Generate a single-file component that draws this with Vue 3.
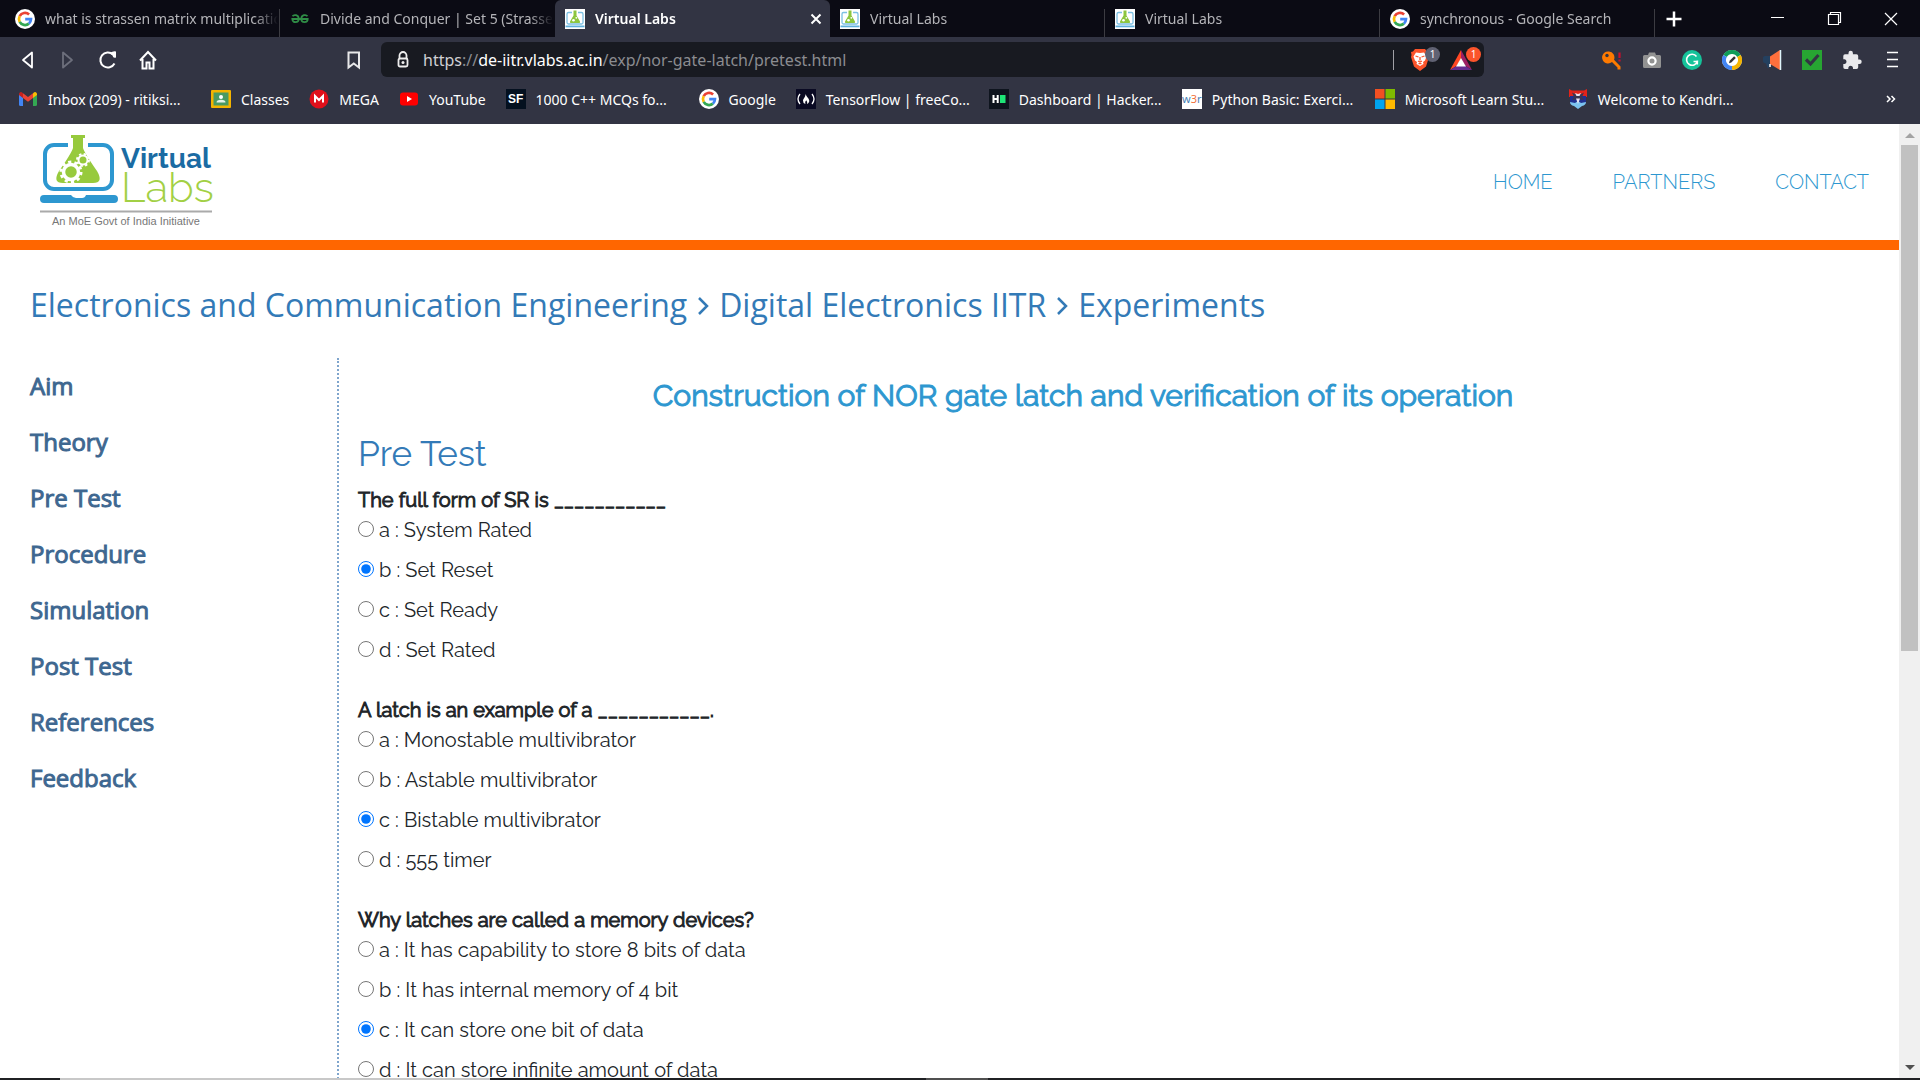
<script setup>
import { reactive } from 'vue'

const tabs = [
  { icon: 'google', title: 'what is strassen matrix multiplication' },
  { icon: 'gfg', title: 'Divide and Conquer | Set 5 (Strassen' },
  { icon: 'vlabs', title: 'Virtual Labs', active: true },
  { icon: 'vlabs', title: 'Virtual Labs' },
  { icon: 'vlabs', title: 'Virtual Labs' },
  { icon: 'google', title: 'synchronous - Google Search' }
]

const bookmarks = [
  { icon: 'gmail', title: 'Inbox (209) - ritiksi...', long: true },
  { icon: 'classroom', title: 'Classes' },
  { icon: 'mega', title: 'MEGA' },
  { icon: 'youtube', title: 'YouTube' },
  { icon: 'sf', title: '1000 C++ MCQs fo...', long: true },
  { icon: 'google', title: 'Google' },
  { icon: 'fcc', title: 'TensorFlow | freeCo...', long: true },
  { icon: 'hacker', title: 'Dashboard | Hacker...', long: true },
  { icon: 'w3r', title: 'Python Basic: Exerci...', long: true },
  { icon: 'microsoft', title: 'Microsoft Learn Stu...', long: true },
  { icon: 'kv', title: 'Welcome to Kendri...', long: true }
]

const extensions = ['key', 'camera', 'grammarly', 'pen', 'horn', 'check', 'puzzle', 'menu']

const siteLinks = ['HOME', 'PARTNERS', 'CONTACT']
const sections = ['Aim', 'Theory', 'Pre Test', 'Procedure', 'Simulation', 'Post Test', 'References', 'Feedback']

const questions = reactive([
  {
    text: 'The full form of SR is ___________',
    picked: 'b',
    options: { a: 'System Rated', b: 'Set Reset', c: 'Set Ready', d: 'Set Rated' }
  },
  {
    text: 'A latch is an example of a ___________.',
    picked: 'c',
    options: { a: 'Monostable multivibrator', b: 'Astable multivibrator', c: 'Bistable multivibrator', d: '555 timer' }
  },
  {
    text: 'Why latches are called a memory devices?',
    picked: 'c',
    options: {
      a: 'It has capability to store 8 bits of data',
      b: 'It has internal memory of 4 bit',
      c: 'It can store one bit of data',
      d: 'It can store infinite amount of data'
    }
  }
])
</script>

<template>
  <div class="window">
    <svg class="defs" aria-hidden="true">
      <symbol id="google" viewBox="0 0 20 20">
        <circle cx="10" cy="10" r="10" fill="#fff" />
        <g fill="none" stroke-width="2.7">
          <path d="M14.1 5.4A6 6 0 0 0 4.7 7.2" stroke="#ea4335" />
          <path d="M4.7 7.2A6 6 0 0 0 4.7 12.8" stroke="#fbbc05" />
          <path d="M4.7 12.8A6 6 0 0 0 13.9 14.6" stroke="#34a853" />
          <path d="M13.9 14.6A6 6 0 0 0 16 10.1H10.2" stroke="#4285f4" />
        </g>
      </symbol>
      <symbol id="gfg" viewBox="0 0 20 20">
        <g fill="none" stroke="#2f8d46" stroke-width="1.8">
          <path d="M2.5 7.2C4 5.3 8.7 5.6 8.7 10a3.2 3.2 0 0 1-6.4 0H17.7a3.2 3.2 0 0 1-6.4 0c0-4.4 4.7-4.7 6.2-2.8" />
        </g>
      </symbol>
      <symbol id="vlabs" viewBox="0 0 20 20">
        <rect width="20" height="20" fill="#fff" />
        <path d="M7 3.5H3.500a1.500 1.500 0 0 0-1.500 1.500v8.500A1.500 1.500 0 0 0 3.500 15h13a1.500 1.500 0 0 0 1.500-1.500V5a1.500 1.500 0 0 0-1.500-1.500H13" fill="none" stroke="#7cc0e4" stroke-width="1.3" />
        <path d="M0.5 16.5h19v1.8h-19z" fill="#5fb0dc" />
        <path d="M8.5 1.5h3v5l3.500 6q.5 1.500-1 1.500H6q-1.500 0-1-1.500l3.500-6z" fill="#8dc63f" />
        <circle cx="8.5" cy="11.3" r="1.3" fill="#fff" />
        <circle cx="11.3" cy="8.8" r=".9" fill="#fff" />
      </symbol>
      <symbol id="gmail" viewBox="0 0 20 20">
        <path d="M1 5.5v10A1.500 1.500 0 0 0 2.500 17H5V8.500z" fill="#4285f4" />
        <path d="M19 5.5v10a1.500 1.500 0 0 1-1.500 1.500H15V8.500z" fill="#34a853" />
        <path d="M15 4.5V9l4-3V5a2 2 0 0 0-3.200-1.500z" fill="#fbbc04" />
        <path d="M5 4.5V9L1 6V5a2 2 0 0 1 3.200-1.500z" fill="#c5221f" />
        <path d="M5 4.2l5 3.800 5-3.800V9l-5 3.800L5 9z" fill="#ea4335" />
      </symbol>
      <symbol id="classroom" viewBox="0 0 20 20">
        <rect y="1" width="20" height="18" rx="1" fill="#f4b400" />
        <rect x="2.5" y="3.500" width="15" height="13" fill="#4a9a62" />
        <circle cx="10" cy="8" r="2" fill="#fff" />
        <path d="M5.5 13.500q0-2.700 4.500-2.700t4.500 2.700z" fill="#e4f2e8" />
      </symbol>
      <symbol id="mega" viewBox="0 0 20 20">
        <circle cx="10" cy="10" r="9.5" fill="#e0101b" />
        <path d="M6 13.500V7l4 4 4-4v6.500" fill="none" stroke="#fff" stroke-width="2" />
      </symbol>
      <symbol id="youtube" viewBox="0 0 20 20">
        <rect x="1" y="3.5" width="18" height="13" rx="3" fill="#f00" />
        <path d="M8 7v6l5-3z" fill="#fff" />
      </symbol>
      <symbol id="fcc" viewBox="0 0 20 20">
        <rect width="20" height="20" fill="#0a0a23" />
        <path d="M4 5Q0 10 4 15M16 5q4 5 0 10" fill="none" stroke="#fff" stroke-width="1.3" />
        <path d="M9.500 5c1 3 4 4.700 3.800 7.200q-.5 2-2.300 2.800q.8-2.300-.8-3.800q-1.600 1.500-.8 3.800Q6.800 14 7 11.500c.2-2 2.500-3 2.500-6.500z" fill="#fff" />
      </symbol>
      <symbol id="hacker" viewBox="0 0 20 20">
        <rect width="20" height="20" fill="#0e141e" />
        <path d="M4.5 6v8M8.700 6v8M4.500 10h4" stroke="#fff" stroke-width="2" />
        <rect x="11" y="6" width="5.5" height="8" fill="#1ee577" />
      </symbol>
      <symbol id="microsoft" viewBox="0 0 20 20">
        <path d="M0 0h9.500v9.500H0z" fill="#f25022" />
        <path d="M10.500 0H20v9.500h-9.500z" fill="#7fba00" />
        <path d="M0 10.500h9.500V20H0z" fill="#00a4ef" />
        <path d="M10.500 10.500H20V20h-9.500z" fill="#ffb900" />
      </symbol>
      <symbol id="kv" viewBox="0 0 20 20">
        <path d="M1 0l3 1.500h12L19 0v8H1z" fill="#e2231a" />
        <path d="M2 7h16v6l-4 3-4 3.500L6 16l-4-3z" fill="#20308f" />
        <path d="M2 13l5 1 3-2 3 2 5-1q0 3-4 4l-4 3-4-3q-4-1-4-4z" fill="#7cc4f0" />
        <path d="M4 3.500l3 1.500h6l3-1.500L14 8l2 3-6-1-6 1 2-3z" fill="#3a3550" />
        <path d="M7 4l3 1 3-1-1.500 3h-3zM8 9.500h4L10 15z" fill="#e8e2ee" />
      </symbol>
      <symbol id="key" viewBox="0 0 20 20">
        <path d="M7 1.500a6 6 0 1 0 3 10.500l5.500 5.500v2h3v-3L12 9.700A6 6 0 0 0 7 1.500z" fill="#ff7a00" />
        <circle cx="5" cy="5.5" r="1.7" fill="#323443" />
        <path d="M17.500 2.500v5.500M17.500 9.500v2" stroke="#c8102e" stroke-width="2.2" />
      </symbol>
      <symbol id="camera" viewBox="0 0 20 20">
        <path d="M2.500 5H6l1-2.500h6L14 5h3.500A1.500 1.500 0 0 1 19 6.500v10a1.500 1.500 0 0 1-1.500 1.500h-15A1.500 1.500 0 0 1 1 16.500v-10A1.500 1.500 0 0 1 2.500 5z" fill="#929292" />
        <circle cx="10" cy="11" r="3.6" fill="#929292" stroke="#fff" stroke-width="2.2" />
      </symbol>
      <symbol id="grammarly" viewBox="0 0 20 20">
        <circle cx="10" cy="10" r="10" fill="#15c39a" />
        <path d="M14.500 6.500A5.500 5.500 0 1 0 15.300 11.500H11.500M15.300 10.500v4" fill="none" stroke="#fff" stroke-width="1.6" />
      </symbol>
      <symbol id="pen" viewBox="0 0 20 20">
        <circle cx="10" cy="10" r="10" fill="#fff" />
        <g fill="none" stroke-width="4">
          <path d="M3.070 6A8 8 0 0 1 16.930 6" stroke="#0f9d58" />
          <path d="M16.930 6A8 8 0 0 1 10 18" stroke="#f4b400" />
          <path d="M10 18A8 8 0 0 1 3.070 6" stroke="#4285f4" />
        </g>
        <path d="M7 13.200l.6-2.400 4.500-4.500 1.700 1.700-4.500 4.500z" fill="#333" />
      </symbol>
      <symbol id="horn" viewBox="0 0 20 20">
        <path d="M1 7.500Q1 6 3 6h5v7l-1 5H5.500L4 13.500Q1 13 1 11z" fill="#24405f" />
        <path d="M8 6.500L18 0v20L8 14z" fill="#ff6f3c" />
        <path d="M18.500 0v20" stroke="#dff4fb" stroke-width="1.5" />
        <path d="M8 14v3" stroke="#fff" stroke-width="1.5" />
      </symbol>
      <symbol id="check" viewBox="0 0 20 20">
        <rect width="20" height="20" fill="#27a532" />
        <path d="M4 9.500l4.500 4.500 8-9" fill="none" stroke="#323443" stroke-width="3.2" />
      </symbol>
      <symbol id="puzzle" viewBox="0 0 20 20">
        <path d="M17.500 9.500h-1.300V6A1.700 1.700 0 0 0 14.500 4.300h-3.600V3a2.200 2.200 0 0 0-4.400 0v1.300H3A1.700 1.700 0 0 0 1.300 6v3.300h1.300a2.400 2.400 0 0 1 0 4.700H1.300v3.300A1.700 1.700 0 0 0 3 19h3.300v-1.300a2.400 2.400 0 0 1 4.700 0V19h3.500a1.700 1.700 0 0 0 1.700-1.700v-3.400h1.300a2.200 2.200 0 0 0 0-4.400z" fill="#e9e9ec" />
      </symbol>
      <symbol id="menu" viewBox="0 0 20 20">
        <path d="M5 2.500h11M5 9.500h11M5 16.500h11" stroke="#fff" stroke-width="1.5" />
      </symbol>
    </svg>

    <header class="chrome">
      <div class="tabs">
        <div v-for="(tab, i) in tabs" :key="i" class="tab" :class="{ active: tab.active }">
          <svg class="glyph"><use :href="'#' + tab.icon" /></svg>
          <span class="tab-title">{{ tab.title }}</span>
          <button v-if="tab.active" class="plain" aria-label="Close tab">
            <svg class="close" viewBox="0 0 12 12"><path d="M1.500 1.500l9 9M10.500 1.500l-9 9" stroke="#fff" stroke-width="2" /></svg>
          </button>
        </div>
        <button class="plain new-tab" aria-label="New tab">
          <svg class="glyph" viewBox="0 0 20 20"><path d="M10 2.500v15M2.500 10h15" stroke="#fff" stroke-width="2.5" /></svg>
        </button>
        <div class="window-buttons">
          <button class="plain" aria-label="Minimize"><svg class="glyph" viewBox="0 0 20 20"><path d="M3 8.500h13" stroke="#fff" /></svg></button>
          <button class="plain" aria-label="Restore"><svg class="glyph" viewBox="0 0 20 20"><path d="M3.500 5.500h10v10h-10zM5.500 5V3.500h10v10H14" fill="none" stroke="#fff" stroke-width="1.2" /></svg></button>
          <button class="plain" aria-label="Close"><svg class="glyph" viewBox="0 0 20 20"><path d="M3 4l12 12M15 4L3 16" stroke="#fff" stroke-width="1.2" /></svg></button>
        </div>
      </div>

      <div class="toolbar">
        <button class="plain tool" aria-label="Back"><svg class="glyph" viewBox="0 0 20 20"><path d="M14 2.500v15L5 10z" fill="none" stroke="#fff" stroke-width="1.8" stroke-linejoin="round" /></svg></button>
        <button class="plain tool" aria-label="Forward"><svg class="glyph" viewBox="0 0 20 20"><path d="M5 2.500v15l9-7.500z" fill="none" stroke="#6d6f7c" stroke-width="1.8" stroke-linejoin="round" /></svg></button>
        <button class="plain tool" aria-label="Reload"><svg class="glyph" viewBox="0 0 20 20"><path d="M15 4.500A7.500 7.500 0 1 0 16.500 13.500" fill="none" stroke="#fff" stroke-width="2" /><path d="M12 3q3.500-2.500 6-1.500v6q-3 1-3.500-2z" fill="#fff" /></svg></button>
        <button class="plain tool" aria-label="Home"><svg class="glyph" viewBox="0 0 20 20"><path d="M2 10.500L10 2l8 8.500M4.500 9v9.500h4v-6h3v6h4V9" fill="none" stroke="#fff" stroke-width="2" /></svg></button>
        <button class="plain tool save" aria-label="Bookmark this page"><svg class="glyph" viewBox="0 0 20 20"><path d="M4.500 2.500h10.500v15L9.750 13.500 4.500 17.500z" fill="none" stroke="#e8e8ea" stroke-width="2" /></svg></button>
        <div class="address">
          <svg class="glyph" viewBox="0 0 20 20"><path d="M6.500 8V5.500a3.500 3.500 0 0 1 7 0V8" fill="none" stroke="#eee" stroke-width="1.8" /><rect x="5.500" y="8.500" width="9" height="8" rx="1.5" fill="none" stroke="#eee" stroke-width="1.8" /><circle cx="10" cy="12.500" r="1.5" fill="#eee" /></svg>
          <a class="url" href="https://de-iitr.vlabs.ac.in/exp/nor-gate-latch/pretest.html"><span class="scheme">https</span><span>://</span><span class="host">de-iitr.vlabs.ac.in</span><span>/exp/nor-gate-latch/pretest.html</span></a>
          <span class="divider"></span>
          <span class="shield">
            <svg class="shield-icon" viewBox="0 0 20 22"><path d="M5 0h10l2 2.500 2 .5-.5 3 .5 2-3 9.500L10 22l-6-4.500L1 8l.5-2L1 3l2-.5z" fill="#fb542b" /><path d="M10 4l4-.5 2.500 4-1.500 4-2 1.500.5 2L10 17l-3.500-2 .5-2-2-1.500-1.500-4L6 3.500z" fill="#fff" /><path d="M5.500 7l3 1M14.500 7l-3 1M10 8v3.500M8 12l2 1 2-1M8.500 14.700h3" stroke="#fb542b" stroke-width="1.3" fill="none" /></svg>
            <span class="count">1</span>
          </span>
          <span class="shield">
            <svg class="shield-icon" viewBox="0 0 22 20"><path d="M11 0v9L6.500 16 0 20z" fill="#ff4724" /><path d="M11 0v9l4.500 7 6.500 4z" fill="#9e1f63" /><path d="M0 20l6.500-4h9l6.500 4z" fill="#662d91" /><path d="M11 8l5 8.500H6z" fill="#fff" /></svg>
            <span class="count hot">1</span>
          </span>
        </div>
        <div class="extensions">
          <button v-for="name in extensions" :key="name" class="plain tool" :aria-label="name">
            <svg class="glyph"><use :href="'#' + name" /></svg>
          </button>
        </div>
      </div>

      <nav class="bookmarks" aria-label="Bookmarks">
        <a v-for="mark in bookmarks" :key="mark.title" href="#" class="bookmark">
          <span v-if="mark.icon === 'sf'" class="letters sf">SF</span>
          <span v-else-if="mark.icon === 'w3r'" class="letters w3r">w<b>3</b>r</span>
          <svg v-else class="glyph"><use :href="'#' + mark.icon" /></svg>
          <span :class="{ long: mark.long }">{{ mark.title }}</span>
        </a>
        <button class="plain more" aria-label="More bookmarks">
          <svg viewBox="0 0 10 8" width="10" height="8"><path d="M1 1l3 3-3 3M5.500 1l3 3-3 3" fill="none" stroke="#fff" stroke-width="1.5" /></svg>
        </button>
      </nav>
    </header>

    <div class="viewport">
      <div class="page">
        <header class="site-header">
          <a href="#" class="logo" aria-label="Virtual Labs">
            <svg viewBox="0 0 176 96" width="176" height="96">
              <path d="M28 11H14a9 9 0 0 0-9 9V46a9 9 0 0 0 9 9H63a9 9 0 0 0 9-9V20a9 9 0 0 0-9-9H48" fill="none" stroke="#2d97d0" stroke-width="4" />
              <path d="M4 61h27q2 3 5 3h6q3 0 4-3h28q4 0 4 4t-4 4H4q-4 0-4-4t4-4z" fill="#2d97d0" />
              <path d="M31 1h14v3h-2v10q2 6 14 23q7 12-4 12H23q-11 0-4-12q12-17 14-23V4h-2z" fill="#97ca3d" />
              <g fill="none" stroke="#fff">
                <circle cx="31" cy="38" r="7.5" stroke-width="3.5" />
                <circle cx="31" cy="38" r="10" stroke-width="3" stroke-dasharray="3.140" />
                <circle cx="43" cy="26" r="4.5" stroke-width="2" />
                <circle cx="43" cy="26" r="6" stroke-width="2" stroke-dasharray="2.356" />
              </g>
              <text x="81" y="34" class="logo-virtual">Virtual</text>
              <text x="81" y="68" class="logo-labs">Labs</text>
              <path d="M0 77.500h172" stroke="#aaa" stroke-width="2" />
              <text x="86" y="91" text-anchor="middle" class="logo-tag">An MoE Govt of India Initiative</text>
            </svg>
          </a>
          <nav class="site-nav" aria-label="Site">
            <a v-for="link in siteLinks" :key="link" href="#">{{ link }}</a>
          </nav>
        </header>

        <h1 class="crumbs">
          <a href="#">Electronics and Communication Engineering</a>
          <svg class="chevron" viewBox="0 0 14 20"><path d="M3 3l8 8-8 8" fill="none" stroke="#337ab7" stroke-width="2.5" /></svg>
          <a href="#">Digital Electronics IITR</a>
          <svg class="chevron" viewBox="0 0 14 20"><path d="M3 3l8 8-8 8" fill="none" stroke="#337ab7" stroke-width="2.5" /></svg>
          <a href="#">Experiments</a>
        </h1>

        <div class="columns">
          <nav class="sections" aria-label="Sections">
            <a v-for="name in sections" :key="name" href="#">{{ name }}</a>
          </nav>
          <main class="content">
            <h2>Construction of NOR gate latch and verification of its operation</h2>
            <h3>Pre Test</h3>
            <fieldset v-for="(question, i) in questions" :key="i">
              <legend>{{ question.text }}</legend>
              <label v-for="(answer, letter) in question.options" :key="letter">
                <input v-model="question.picked" type="radio" :name="'question' + i" :value="letter" />
                {{ letter }} : {{ answer }}
              </label>
            </fieldset>
          </main>
        </div>
      </div>
      <div class="scrollbar" aria-hidden="true">
        <span class="arrow up"></span>
        <span class="thumb"></span>
        <span class="arrow down"></span>
      </div>
    </div>
    <div class="taskbar"><span class="search-edge"></span><span class="app-edge"></span></div>
  </div>
</template>

<style>
body {
  margin: 0;
}
</style>

<style scoped>
.window {
  display: flex;
  flex-direction: column;
  height: 100vh;
  overflow: hidden;
  background: #fff;
  font-family: 'Open Sans', sans-serif;
}
.defs {
  position: absolute;
  width: 0;
  height: 0;
}
a {
  color: inherit;
  text-decoration: none;
}
.plain {
  display: flex;
  align-items: center;
  justify-content: center;
  padding: 0;
  border: 0;
  background: none;
}
.glyph {
  flex: none;
  display: block;
  width: 20px;
  height: 20px;
}

/* Browser frame */
.chrome {
  flex: none;
  background: #323443;
  color: #fff;
  font-family: 'Noto Sans', sans-serif;
  font-size: 14px;
}
.tabs {
  display: flex;
  height: 37px;
  padding-left: 5px;
  background: #0b0b14;
}
.tab {
  display: flex;
  flex: 0 1 275px;
  align-items: center;
  gap: 10px;
  box-sizing: border-box;
  min-width: 0;
  padding: 0 2px 0 10px;
  color: #b4b4b8;
  background: linear-gradient(#3c3c42, #3c3c42) right bottom / 1px 28px no-repeat;
}
.tab:nth-child(2) {
  background: none;
}
.tab-title {
  flex: 1;
  overflow: hidden;
  white-space: nowrap;
  -webkit-mask-image: linear-gradient(90deg, #000 90%, transparent);
  mask-image: linear-gradient(90deg, #000 90%, transparent);
}
.tab.active {
  padding-right: 8px;
  border-radius: 6px 6px 0 0;
  background: #323443;
  color: #fff;
  font-weight: 600;
}
.close {
  width: 12px;
  height: 12px;
}
.new-tab {
  width: 38px;
}
.window-buttons {
  display: flex;
  margin-left: auto;
}
.window-buttons .plain {
  width: 57px;
}
.toolbar {
  display: flex;
  align-items: center;
  height: 45px;
  padding: 0 8px;
}
.tool {
  width: 40px;
  height: 36px;
}
.save {
  margin-left: 166px;
}
.address {
  display: flex;
  flex: 1;
  align-items: center;
  height: 35px;
  margin: 0 108px 0 7px;
  padding: 0 3px 0 12px;
  border-radius: 6px;
  background: #181a21;
}
.url {
  flex: 1;
  margin-left: 10px;
  color: #8b8c90;
  font-size: 16px;
}
.scheme {
  color: #d0d0d4;
}
.host {
  color: #fff;
}
.divider {
  width: 1px;
  height: 20px;
  margin-right: 15px;
  background: #a0a0a6;
}
.shield {
  position: relative;
  width: 31px;
  height: 22px;
}
.shield + .shield {
  margin-left: 10px;
}
.shield-icon {
  display: block;
  width: 22px;
  height: 22px;
}
.count {
  position: absolute;
  top: -2px;
  right: 0;
  width: 15px;
  border-radius: 8px;
  background: #606273;
  font-size: 10px;
  line-height: 15px;
  text-align: center;
}
.hot {
  background: #fb542b;
}
.extensions {
  display: flex;
}
.bookmarks {
  display: flex;
  align-items: center;
  gap: 20px;
  height: 34px;
  padding: 0 24px 8px 18px;
}
.bookmark {
  display: flex;
  align-items: center;
  gap: 10px;
  white-space: nowrap;
}
.letters {
  width: 20px;
  font-size: 12px;
  line-height: 20px;
  text-align: center;
}
.sf {
  background: #04101f;
  font-family: 'Liberation Sans', sans-serif;
  font-weight: 700;
}
.w3r {
  background: #fff;
  color: #4a7fb5;
  font-size: 11px;
}
.w3r b {
  color: #f0703a;
  font-weight: 400;
}
.long {
  width: 143px;
}
.more {
  margin-left: auto;
}

/* Web page */
.viewport {
  display: flex;
  flex: 1;
  min-height: 0;
}
.page {
  flex: 1;
  min-width: 0;
  overflow: hidden;
}
.site-header {
  display: flex;
  align-items: center;
  justify-content: space-between;
  height: 116px;
  padding: 0 30px 0 40px;
  border-bottom: 10px solid #f60;
}
.logo svg {
  display: block;
}
.logo-virtual {
  fill: #1a6ba3;
  font: 700 28px Raleway, Lato, sans-serif;
}
.logo-labs {
  fill: #a2d045;
  font: 300 42px Raleway, Lato, sans-serif;
}
.logo-tag {
  fill: #777;
  font: 11px 'Liberation Sans', sans-serif;
}
.site-nav {
  display: flex;
  gap: 60px;
  color: #2d97d0;
  font: 300 20px/30px Raleway, Lato, sans-serif;
}
.crumbs {
  display: flex;
  align-items: center;
  margin: 31px 30px 29px;
  color: #337ab7;
  font-size: 32px;
  font-weight: 400;
  line-height: 48px;
}
.chevron {
  width: 14px;
  height: 20px;
  margin: 0 9px;
}
.columns {
  display: flex;
}
.sections {
  display: flex;
  flex: 0 0 307px;
  flex-direction: column;
  gap: 20px;
  padding: 10px 0 0 30px;
  border-right: 2px dotted #7fa5cd;
  color: #3e6790;
  font-size: 24px;
  line-height: 36px;
  -webkit-text-stroke: 1px currentColor;
}
.content {
  flex: 1;
  padding: 0 91px 0 19px;
  color: #212529;
  font: 400 20px/30px Raleway, Lato, sans-serif;
}
h2 {
  margin: 20px 0 18px;
  color: #2d97d0;
  font-size: 30px;
  font-weight: 400;
  line-height: 36px;
  text-align: center;
  -webkit-text-stroke: 1px currentColor;
}
h3 {
  margin: 0 0 9px;
  color: #337ab7;
  font-size: 35px;
  font-weight: 400;
  line-height: 44px;
}
fieldset {
  min-width: 0;
  margin: 0 0 20px;
  padding: 0;
  border: 0;
}
legend {
  padding: 0;
  -webkit-text-stroke: 1px currentColor;
}
label {
  display: flex;
  align-items: center;
  gap: 5px;
  margin-bottom: 10px;
}
input {
  width: 16px;
  height: 16px;
  margin: 0 0 2px;
}
.scrollbar {
  display: flex;
  flex: 0 0 21px;
  flex-direction: column;
  align-items: center;
  background: #f0f0f0;
}
.arrow {
  border: 5px solid transparent;
}
.up {
  margin: 4px 0 7px;
  border-bottom-color: #a3a3a3;
}
.thumb {
  width: 17px;
  height: 53%;
  background: #c1c1c1;
}
.down {
  margin: auto 0 3px;
  border-top-color: #505050;
}
.taskbar {
  display: flex;
  flex: none;
  height: 2px;
  background: #202124;
}
.search-edge {
  width: 430px;
  margin-left: 60px;
  background: #c8c8c8;
}
.app-edge {
  width: 62px;
  margin-left: 436px;
  background: #505050;
}
</style>
